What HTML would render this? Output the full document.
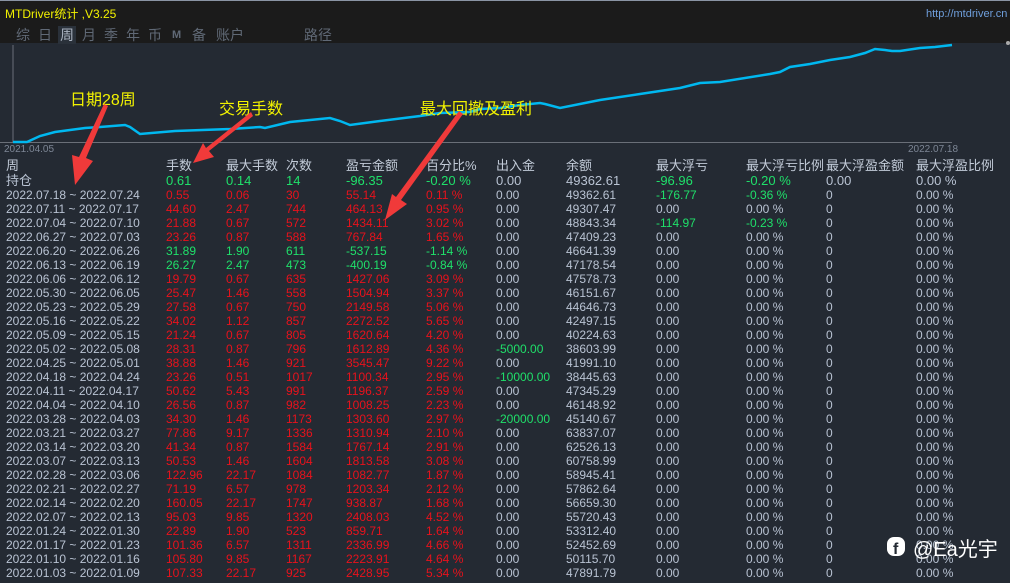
<!DOCTYPE html>
<html><head><meta charset="utf-8">
<style>
*{margin:0;padding:0;box-sizing:border-box}
body{width:1010px;height:583px;overflow:hidden;background:#242a33;font-family:"Liberation Sans","Noto Sans CJK SC",sans-serif;position:relative;color:#b9c3d3}
#top{position:absolute;left:0;top:0;width:1010px;height:43px;background:#1b1b1b;border-top:1px solid #8a94a4}
#title{position:absolute;left:5px;top:4px;font-size:12px;color:#f2f200}
#url{position:absolute;left:926px;top:7px;font-size:11px;color:#6f9fdc}
.tab{position:absolute;top:25px;font-size:14px;color:#606976;line-height:18px}
.sel{background:#2a313a;color:#aab3c0;padding:0 2px;margin-left:-2px}
.r{position:absolute;left:0;height:14px;line-height:14px;font-size:12px;white-space:nowrap;width:1010px}
.r span{position:absolute;top:0}
.r span:nth-child(1){left:6px;color:#b9c3d3}
.r span:nth-child(2){left:166px}
.r span:nth-child(3){left:226px}
.r span:nth-child(4){left:286px}
.r span:nth-child(5){left:346px}
.r span:nth-child(6){left:426px}
.r span:nth-child(7){left:496px;color:#b9c3d3}
.r span:nth-child(8){left:566px;color:#b9c3d3}
.r span:nth-child(9){left:656px;color:#b9c3d3}
.r span:nth-child(10){left:746px;color:#b9c3d3}
.r span:nth-child(11){left:826px;color:#b9c3d3}
.r span:nth-child(12){left:916px;color:#b9c3d3}
.h{font-size:13px}
.h span{color:#c2cbd8!important}
.red{color:#e8121c}
.grn{color:#1fe06a}
.r .g{color:#1fe06a!important}
.ann{position:absolute;font-size:16px;color:#f2f200;white-space:nowrap}
</style></head><body>
<div id="top">
<div id="title">MTDriver统计 ,V3.25</div>
<div id="url">http://mtdriver.cn</div>
<div class="tab" style="left:16px">综</div>
<div class="tab" style="left:38px">日</div>
<div class="tab sel" style="left:60px">周</div>
<div class="tab" style="left:82px">月</div>
<div class="tab" style="left:104px">季</div>
<div class="tab" style="left:126px">年</div>
<div class="tab" style="left:148px">币</div>
<div class="tab" style="left:172px;font-size:11px;font-weight:bold">M</div>
<div class="tab" style="left:192px">备</div>
<div class="tab" style="left:216px">账户</div>
<div class="tab" style="left:304px">路径</div>
</div>
<svg style="position:absolute;left:0;top:0" width="1010" height="583">
<line x1="13" y1="45" x2="13" y2="142" stroke="#6a6f78" stroke-width="1"/>
<line x1="0" y1="142.5" x2="952" y2="142.5" stroke="#6a6f78" stroke-width="1"/>
<polyline fill="none" stroke="#00b8f0" stroke-width="2.5" points="13,142 27,142 40,136 55,132 70,130 85,128 100,127 125,125 130,127 140,134 175,131 230,129 260,127 265,128 290,122 330,118 340,121 350,125 380,121 420,116 440,113 470,112 480,109 500,108 520,105 540,103 545,104 560,108 600,100 640,94 680,88 700,83 720,82 770,74 780,72 790,67 810,64 830,60 850,57 865,53 875,49 885,50 892,51 900,51 920,48 935,47 952,45"/>
<text x="4" y="152" font-size="10" fill="#7d8695" font-family="Liberation Sans">2021.04.05</text>
<text x="908" y="152" font-size="10" fill="#7d8695" font-family="Liberation Sans">2022.07.18</text>
<circle cx="1008" cy="43" r="2" fill="#aaa"/>
</svg>
<div class="ann" style="left:70px;top:86px">日期28周</div>
<div class="ann" style="left:219px;top:95px">交易手数</div>
<div class="ann" style="left:420px;top:95px">最大回撤及盈利</div>

<div class="r h" style="top:159px"><span>周</span><span>手数</span><span>最大手数</span><span>次数</span><span>盈亏金额</span><span>百分比%</span><span>出入金</span><span>余额</span><span>最大浮亏</span><span>最大浮亏比例</span><span>最大浮盈金额</span><span>最大浮盈比例</span></div>
<div class="r grn" style="top:174px;font-size:13px"><span>持仓</span><span>0.61</span><span>0.14</span><span>14</span><span>-96.35</span><span>-0.20 %</span><span>0.00</span><span>49362.61</span><span class="g">-96.96</span><span class="g">-0.20 %</span><span>0.00</span><span>0.00 %</span></div>

<div class="r red" style="top:188px"><span>2022.07.18 ~ 2022.07.24</span><span>0.55</span><span>0.06</span><span>30</span><span>55.14</span><span>0.11 %</span><span>0.00</span><span>49362.61</span><span class="g">-176.77</span><span class="g">-0.36 %</span><span>0</span><span>0.00 %</span></div>
<div class="r red" style="top:202px"><span>2022.07.11 ~ 2022.07.17</span><span>44.60</span><span>2.47</span><span>744</span><span>464.13</span><span>0.95 %</span><span>0.00</span><span>49307.47</span><span>0.00</span><span>0.00 %</span><span>0</span><span>0.00 %</span></div>
<div class="r red" style="top:216px"><span>2022.07.04 ~ 2022.07.10</span><span>21.88</span><span>0.67</span><span>572</span><span>1434.11</span><span>3.02 %</span><span>0.00</span><span>48843.34</span><span class="g">-114.97</span><span class="g">-0.23 %</span><span>0</span><span>0.00 %</span></div>
<div class="r red" style="top:230px"><span>2022.06.27 ~ 2022.07.03</span><span>23.26</span><span>0.87</span><span>588</span><span>767.84</span><span>1.65 %</span><span>0.00</span><span>47409.23</span><span>0.00</span><span>0.00 %</span><span>0</span><span>0.00 %</span></div>
<div class="r grn" style="top:244px"><span>2022.06.20 ~ 2022.06.26</span><span>31.89</span><span>1.90</span><span>611</span><span>-537.15</span><span>-1.14 %</span><span>0.00</span><span>46641.39</span><span>0.00</span><span>0.00 %</span><span>0</span><span>0.00 %</span></div>
<div class="r grn" style="top:258px"><span>2022.06.13 ~ 2022.06.19</span><span>26.27</span><span>2.47</span><span>473</span><span>-400.19</span><span>-0.84 %</span><span>0.00</span><span>47178.54</span><span>0.00</span><span>0.00 %</span><span>0</span><span>0.00 %</span></div>
<div class="r red" style="top:272px"><span>2022.06.06 ~ 2022.06.12</span><span>19.79</span><span>0.67</span><span>635</span><span>1427.06</span><span>3.09 %</span><span>0.00</span><span>47578.73</span><span>0.00</span><span>0.00 %</span><span>0</span><span>0.00 %</span></div>
<div class="r red" style="top:286px"><span>2022.05.30 ~ 2022.06.05</span><span>25.47</span><span>1.46</span><span>558</span><span>1504.94</span><span>3.37 %</span><span>0.00</span><span>46151.67</span><span>0.00</span><span>0.00 %</span><span>0</span><span>0.00 %</span></div>
<div class="r red" style="top:300px"><span>2022.05.23 ~ 2022.05.29</span><span>27.58</span><span>0.67</span><span>750</span><span>2149.58</span><span>5.06 %</span><span>0.00</span><span>44646.73</span><span>0.00</span><span>0.00 %</span><span>0</span><span>0.00 %</span></div>
<div class="r red" style="top:314px"><span>2022.05.16 ~ 2022.05.22</span><span>34.02</span><span>1.12</span><span>857</span><span>2272.52</span><span>5.65 %</span><span>0.00</span><span>42497.15</span><span>0.00</span><span>0.00 %</span><span>0</span><span>0.00 %</span></div>
<div class="r red" style="top:328px"><span>2022.05.09 ~ 2022.05.15</span><span>21.24</span><span>0.67</span><span>805</span><span>1620.64</span><span>4.20 %</span><span>0.00</span><span>40224.63</span><span>0.00</span><span>0.00 %</span><span>0</span><span>0.00 %</span></div>
<div class="r red" style="top:342px"><span>2022.05.02 ~ 2022.05.08</span><span>28.31</span><span>0.87</span><span>796</span><span>1612.89</span><span>4.36 %</span><span class="g">-5000.00</span><span>38603.99</span><span>0.00</span><span>0.00 %</span><span>0</span><span>0.00 %</span></div>
<div class="r red" style="top:356px"><span>2022.04.25 ~ 2022.05.01</span><span>38.88</span><span>1.46</span><span>921</span><span>3545.47</span><span>9.22 %</span><span>0.00</span><span>41991.10</span><span>0.00</span><span>0.00 %</span><span>0</span><span>0.00 %</span></div>
<div class="r red" style="top:370px"><span>2022.04.18 ~ 2022.04.24</span><span>23.26</span><span>0.51</span><span>1017</span><span>1100.34</span><span>2.95 %</span><span class="g">-10000.00</span><span>38445.63</span><span>0.00</span><span>0.00 %</span><span>0</span><span>0.00 %</span></div>
<div class="r red" style="top:384px"><span>2022.04.11 ~ 2022.04.17</span><span>50.62</span><span>5.43</span><span>991</span><span>1196.37</span><span>2.59 %</span><span>0.00</span><span>47345.29</span><span>0.00</span><span>0.00 %</span><span>0</span><span>0.00 %</span></div>
<div class="r red" style="top:398px"><span>2022.04.04 ~ 2022.04.10</span><span>26.56</span><span>0.87</span><span>982</span><span>1008.25</span><span>2.23 %</span><span>0.00</span><span>46148.92</span><span>0.00</span><span>0.00 %</span><span>0</span><span>0.00 %</span></div>
<div class="r red" style="top:412px"><span>2022.03.28 ~ 2022.04.03</span><span>34.30</span><span>1.46</span><span>1173</span><span>1303.60</span><span>2.97 %</span><span class="g">-20000.00</span><span>45140.67</span><span>0.00</span><span>0.00 %</span><span>0</span><span>0.00 %</span></div>
<div class="r red" style="top:426px"><span>2022.03.21 ~ 2022.03.27</span><span>77.86</span><span>9.17</span><span>1336</span><span>1310.94</span><span>2.10 %</span><span>0.00</span><span>63837.07</span><span>0.00</span><span>0.00 %</span><span>0</span><span>0.00 %</span></div>
<div class="r red" style="top:440px"><span>2022.03.14 ~ 2022.03.20</span><span>41.34</span><span>0.87</span><span>1584</span><span>1767.14</span><span>2.91 %</span><span>0.00</span><span>62526.13</span><span>0.00</span><span>0.00 %</span><span>0</span><span>0.00 %</span></div>
<div class="r red" style="top:454px"><span>2022.03.07 ~ 2022.03.13</span><span>50.53</span><span>1.46</span><span>1604</span><span>1813.58</span><span>3.08 %</span><span>0.00</span><span>60758.99</span><span>0.00</span><span>0.00 %</span><span>0</span><span>0.00 %</span></div>
<div class="r red" style="top:468px"><span>2022.02.28 ~ 2022.03.06</span><span>122.96</span><span>22.17</span><span>1084</span><span>1082.77</span><span>1.87 %</span><span>0.00</span><span>58945.41</span><span>0.00</span><span>0.00 %</span><span>0</span><span>0.00 %</span></div>
<div class="r red" style="top:482px"><span>2022.02.21 ~ 2022.02.27</span><span>71.19</span><span>6.57</span><span>978</span><span>1203.34</span><span>2.12 %</span><span>0.00</span><span>57862.64</span><span>0.00</span><span>0.00 %</span><span>0</span><span>0.00 %</span></div>
<div class="r red" style="top:496px"><span>2022.02.14 ~ 2022.02.20</span><span>160.05</span><span>22.17</span><span>1747</span><span>938.87</span><span>1.68 %</span><span>0.00</span><span>56659.30</span><span>0.00</span><span>0.00 %</span><span>0</span><span>0.00 %</span></div>
<div class="r red" style="top:510px"><span>2022.02.07 ~ 2022.02.13</span><span>95.03</span><span>9.85</span><span>1320</span><span>2408.03</span><span>4.52 %</span><span>0.00</span><span>55720.43</span><span>0.00</span><span>0.00 %</span><span>0</span><span>0.00 %</span></div>
<div class="r red" style="top:524px"><span>2022.01.24 ~ 2022.01.30</span><span>22.89</span><span>1.90</span><span>523</span><span>859.71</span><span>1.64 %</span><span>0.00</span><span>53312.40</span><span>0.00</span><span>0.00 %</span><span>0</span><span>0.00 %</span></div>
<div class="r red" style="top:538px"><span>2022.01.17 ~ 2022.01.23</span><span>101.36</span><span>6.57</span><span>1311</span><span>2336.99</span><span>4.66 %</span><span>0.00</span><span>52452.69</span><span>0.00</span><span>0.00 %</span><span>0</span><span>0.00 %</span></div>
<div class="r red" style="top:552px"><span>2022.01.10 ~ 2022.01.16</span><span>105.80</span><span>9.85</span><span>1167</span><span>2223.91</span><span>4.64 %</span><span>0.00</span><span>50115.70</span><span>0.00</span><span>0.00 %</span><span>0</span><span>0.00 %</span></div>
<div class="r red" style="top:566px"><span>2022.01.03 ~ 2022.01.09</span><span>107.33</span><span>22.17</span><span>925</span><span>2428.95</span><span>5.34 %</span><span>0.00</span><span>47891.79</span><span>0.00</span><span>0.00 %</span><span>0</span><span>0.00 %</span></div>

<svg style="position:absolute;left:0;top:0" width="1010" height="583">
<g fill="#f03a3a">
<polygon points="104,104 108,106 86,158 93,161 75,185 72,155 79,157"/>
<polygon points="251,112 253,116 209,151 214,157 193,163 203,143 206,148"/>
<polygon points="459,111 463,114 401,200 407,204 385,220 392,194 396,197"/>
</g>
<rect x="887" y="537" width="18" height="19" rx="7" fill="#fff"/>
<text x="893" y="554" font-size="16" font-weight="bold" fill="#242a33" font-family="Liberation Sans">f</text>
</svg>
<div style="position:absolute;left:913px;top:533px;font-size:20px;color:#fff;white-space:nowrap">@Ea光宇</div>
</body></html>
